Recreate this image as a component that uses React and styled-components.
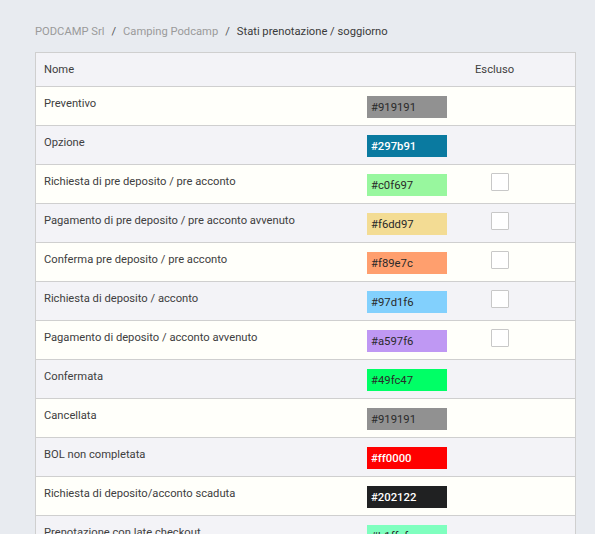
import React from "react";
import styled, { createGlobalStyle } from "styled-components";

const GlobalStyle = createGlobalStyle`
  html, body {
    margin: 0;
    padding: 0;
    background: #e8ebf0;
    font-family: Roboto, "Liberation Sans", sans-serif;
  }
`;

const states = [
  { name: "Preventivo", code: "#919191", bg: "#919191" },
  { name: "Opzione", code: "#297b91", bg: "#0a7aa0", light: true },
  { name: "Richiesta di pre deposito / pre acconto", code: "#c0f697", bg: "#98f79e", check: true },
  { name: "Pagamento di pre deposito / pre acconto avvenuto", code: "#f6dd97", bg: "#f3dc94", check: true },
  { name: "Conferma pre deposito / pre acconto", code: "#f89e7c", bg: "#ff9f6e", check: true },
  { name: "Richiesta di deposito / acconto", code: "#97d1f6", bg: "#82d0fd", check: true },
  { name: "Pagamento di deposito / acconto avvenuto", code: "#a597f6", bg: "#bf98f3", check: true },
  { name: "Confermata", code: "#49fc47", bg: "#00ff66" },
  { name: "Cancellata", code: "#919191", bg: "#919191" },
  { name: "BOL non completata", code: "#ff0000", bg: "#ff0000", light: true },
  { name: "Richiesta di deposito/acconto scaduta", code: "#202122", bg: "#202122", light: true },
  { name: "Prenotazione con late checkout", code: "#b1ffcf", bg: "#7fffbf" },
];

export default function App() {
  return (
    <Page>
      <GlobalStyle />
      <Breadcrumb>
        <Crumb>PODCAMP Srl</Crumb>
        <Sep>/</Sep>
        <Crumb>Camping Podcamp</Crumb>
        <Sep>/</Sep>
        <Crumb current>Stati prenotazione / soggiorno</Crumb>
      </Breadcrumb>
      <Table>
        <HeadRow>
          <NameCell>Nome</NameCell>
          <ColorCell />
          <ExclCell>Escluso</ExclCell>
        </HeadRow>
        {states.map((s, i) => (
          <Row key={i} alt={i % 2 === 1}>
            <NameCell>{s.name}</NameCell>
            <ColorCell>
              <Swatch $bg={s.bg} $light={s.light}>{s.code}</Swatch>
            </ColorCell>
            <ExclCell>{s.check && <CheckBox />}</ExclCell>
          </Row>
        ))}
      </Table>
    </Page>
  );
}

const Page = styled.div`
  padding: 25px 19px 0 35px;
  height: 534px;
  overflow: hidden;
  box-sizing: border-box;
`;

const Breadcrumb = styled.div`
  display: flex;
  align-items: center;
  gap: 7px;
  font-size: 11.2px;
  line-height: 14px;
  margin-bottom: 13px;
`;

const Crumb = styled.span`
  color: ${(p) => (p.current ? "#3a3a3a" : "#9a9a9a")};
`;

const Sep = styled.span`
  color: #555;
`;

const Table = styled.div`
  border: 1px solid #cfcfcf;
  border-bottom: none;
  font-size: 11.2px;
  color: #404040;
`;

const Row = styled.div.withConfig({ shouldForwardProp: (p) => p !== "alt" })`
  display: grid;
  grid-template-columns: 322px 108px 1fr;
  height: 38px;
  border-bottom: 1px solid #cfcfcf;
  background: ${(p) => (p.alt ? "#f3f3f7" : "#fffffa")};
`;

const HeadRow = styled(Row)`
  height: 33px;
  background: #f3f3f7;
  align-items: center;
  & > div {
    padding-top: 0;
  }
`;

const NameCell = styled.div`
  padding: 9px 9px 0 8px;
  line-height: 16px;
`;

const ColorCell = styled.div`
  padding: 9px 9px 0 9px;
`;

const ExclCell = styled.div`
  padding: 8px 9px 0 9px;
  line-height: 16px;
`;

const Swatch = styled.div`
  width: 80px;
  height: 22px;
  box-sizing: border-box;
  padding-left: 4px;
  display: flex;
  align-items: center;
  background: ${(p) => p.$bg};
  color: ${(p) => (p.$light ? "#ffffff" : "#2a2a2a")};
  font-size: 11.3px;
  font-weight: ${(p) => (p.$light ? 500 : 400)};
`;

const CheckBox = styled.div`
  width: 18px;
  height: 18px;
  box-sizing: border-box;
  margin-left: 16px;
  border: 1px solid #c8c8c8;
  border-radius: 1px;
  background: #fff;
`;
